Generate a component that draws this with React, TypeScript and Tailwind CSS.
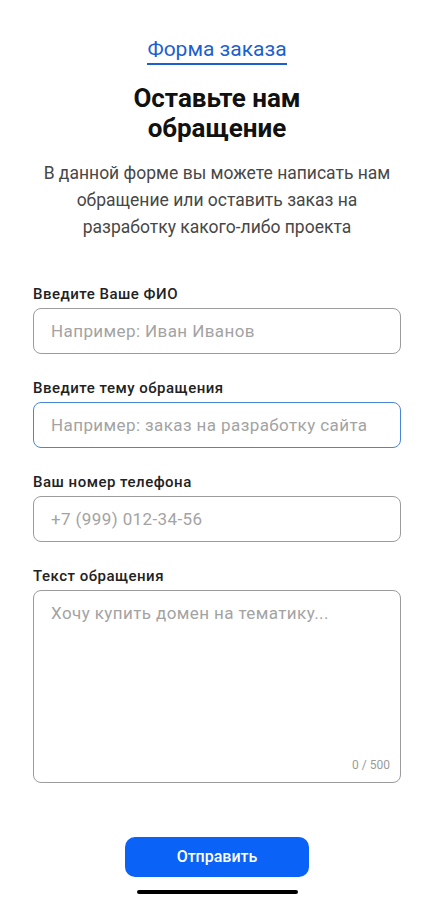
import React from "react";

const font = { fontFamily: "Roboto, 'Noto Sans', sans-serif" };

function Field({ label, placeholder, focused }: { label: string; placeholder: string; focused?: boolean }) {
  return (
    <div className="flex flex-col gap-[4px]">
      <div className="text-[15px] leading-[20px] tracking-[0.5px] font-medium text-[#222]">{label}</div>
      <input
        readOnly
        placeholder={placeholder}
        className={
          focused
            ? "h-[46px] w-full rounded-[8px] border-[1.5px] border-[#4a86d8] bg-white px-[17px] text-[17px] tracking-[0.4px] outline-none placeholder:text-[#a3a3a3]"
            : "h-[46px] w-full rounded-[8px] border-[1.5px] border-[#9c9c9c] bg-white px-[17px] text-[17px] tracking-[0.4px] outline-none placeholder:text-[#a3a3a3]"
        }
        style={font}
      />
    </div>
  );
}

export default function App() {
  return (
    <div className="min-h-screen w-full bg-white flex flex-col items-center" style={font}>
      <div className="pt-[35px]">
        <a className="inline-block text-[21px] leading-[28px] text-[#1c5fce] border-b-2 border-[#1c5fce]">Форма заказа</a>
      </div>
      <h1 className="mt-[18px] text-center text-[26px] leading-[30px] font-bold text-[#111]">
        Оставьте нам
        <br />
        обращение
      </h1>
      <p className="mt-[17px] text-center text-[17.5px] leading-[27px] text-[#474747] px-[20px]">
        В данной форме вы можете написать нам
        <br />
        обращение или оставить заказ на
        <br />
        разработку какого-либо проекта
      </p>
      <div className="mt-[43px] w-full px-[33px] flex flex-col gap-[24px]">
        <Field label="Введите Ваше ФИО" placeholder="Например: Иван Иванов" />
        <Field label="Введите тему обращения" placeholder="Например: заказ на разработку сайта" focused />
        <Field label="Ваш номер телефона" placeholder="+7 (999) 012-34-56" />
        <div className="flex flex-col gap-[4px]">
          <div className="text-[15px] leading-[20px] tracking-[0.5px] font-medium text-[#222]">Текст обращения</div>
          <div className="h-[193px] w-full rounded-[8px] border-[1.5px] border-[#9c9c9c] bg-white flex flex-col pl-[17px] pr-[10px] pt-[10px] pb-[9px]">
            <textarea
              readOnly
              placeholder="Хочу купить домен на тематику..."
              className="flex-1 w-full resize-none text-[17px] leading-[24px] tracking-[0.4px] outline-none placeholder:text-[#a3a3a3]"
              style={font}
            />
            <div className="text-right text-[12px] leading-[16px] text-[#9a9a9a]">0 / 500</div>
          </div>
        </div>
      </div>
      <button className="mt-[54px] h-[40px] w-[184px] rounded-[10px] bg-[#0b62f7] text-white text-[16px] font-medium">
        Отправить
      </button>
      <div className="mt-[13px] h-[4px] w-[161px] rounded-full bg-black" />
    </div>
  );
}
